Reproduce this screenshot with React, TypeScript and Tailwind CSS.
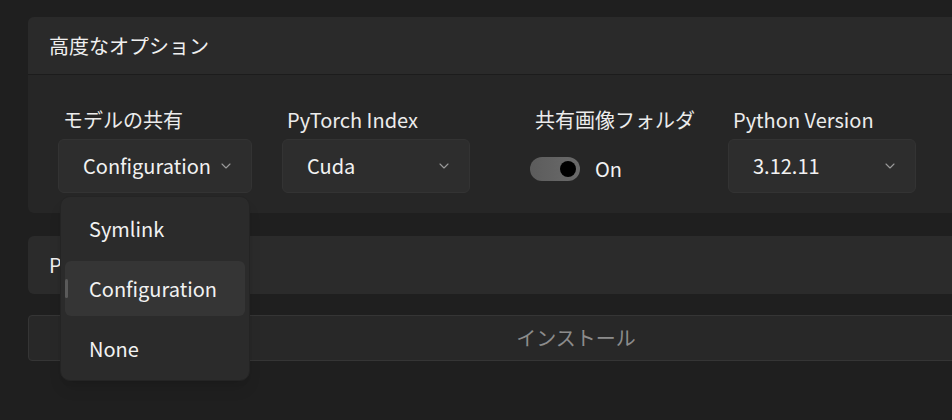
import React from 'react';

const FONT = '"Noto Sans CJK JP", "Noto Sans", sans-serif';

function Chevron() {
  return (
    <svg width="10" height="6" viewBox="0 0 10 6" fill="none" className="shrink-0">
      <path d="M1 1l4 4 4-4" stroke="#9a9a9a" strokeWidth="1.1" strokeLinecap="round" strokeLinejoin="round" />
    </svg>
  );
}

interface SelectBoxProps {
  label: string;
  value: string;
  width: string;
  children?: React.ReactNode;
}

function SelectBox({ label, value, width, children }: SelectBoxProps) {
  return (
    <div className={`relative flex flex-col ${width}`}>
      <label className="pl-[5px] text-[20px] leading-[30px] text-[#ececec]">{label}</label>
      <button
        type="button"
        className="mt-[4px] flex h-[54px] items-center justify-between rounded-[6px] border border-[#333333] bg-[#2d2d2d] pl-[24px] pr-[20px] text-[20px] text-[#f2f2f2]"
      >
        <span>{value}</span>
        <Chevron />
      </button>
      {children}
    </div>
  );
}

const shareOptions = ['Symlink', 'Configuration', 'None'];

export default function App() {
  const [sharedImages, setSharedImages] = React.useState(true);
  const selected = 'Configuration';

  return (
    <div className="h-[420px] w-[952px] overflow-hidden bg-[#1f1f1f]" style={{ fontFamily: FONT }}>
      <div className="flex w-[1152px] flex-col pl-[28px] pt-[17px]">
        <section className="w-[1096px] rounded-[6px] bg-[#262626]">
          <div className="flex h-[58px] items-center rounded-t-[6px] border-b border-[#1c1c1c] bg-[#2a2a2a] px-[21px]">
            <h2 className="text-[20px] text-[#f0f0f0]">高度なオプション</h2>
          </div>
          <div className="flex items-start gap-[30px] pb-[20px] pl-[30px] pt-[30px]">
            <SelectBox label="モデルの共有" value="Configuration" width="w-[194px]">
              <div className="absolute left-[2px] top-full z-10 mt-[3px] flex w-[190px] flex-col gap-[5px] rounded-[10px] border border-[#242424] bg-[#2b2b2b] p-[4px] shadow-lg">
                {shareOptions.map((opt) => (
                  <div
                    key={opt}
                    className={`relative flex h-[55px] items-center rounded-[6px] pl-[24px] text-[20px] text-[#f2f2f2] ${
                      opt === selected ? 'bg-[#353535]' : ''
                    }`}
                  >
                    {opt === selected && (
                      <span className="absolute left-0 top-[18px] h-[19px] w-[3px] rounded-full bg-[#5a5a5a]" />
                    )}
                    {opt}
                  </div>
                ))}
              </div>
            </SelectBox>
            <SelectBox label="PyTorch Index" value="Cuda" width="w-[188px]" />
            <div className="ml-[30px] flex w-[168px] flex-col">
              <label className="pl-[5px] text-[20px] leading-[30px] text-[#ececec]">共有画像フォルダ</label>
              <div className="mt-[4px] flex h-[54px] items-center gap-[15px]">
                <button
                  type="button"
                  onClick={() => setSharedImages(!sharedImages)}
                  className="relative mt-[6px] h-[24px] w-[50px] rounded-full bg-gradient-to-r from-[#5c5c5c] to-[#6a6a6a]"
                >
                  <span
                    className={`absolute top-[4px] h-[16px] w-[16px] rounded-full bg-black ${
                      sharedImages ? 'right-[4px]' : 'left-[4px]'
                    }`}
                  />
                </button>
                <span className="mt-[6px] text-[20px] text-[#f2f2f2]">{sharedImages ? 'On' : 'Off'}</span>
              </div>
            </div>
            <SelectBox label="Python Version" value="3.12.11" width="w-[188px]" />
          </div>
        </section>

        <section className="mt-[23px] flex h-[58px] w-[1096px] items-center rounded-[6px] bg-[#2b2b2b] px-[21px]">
          <h2 className="text-[20px] text-[#f0f0f0]">PyTorch</h2>
        </section>

        <button
          type="button"
          className="mt-[21px] h-[46px] w-[1096px] rounded-[4px] border border-[#353535] bg-[#282828] text-[20px] text-[#8c8c8c]"
        >
          インストール
        </button>
      </div>
    </div>
  );
}
